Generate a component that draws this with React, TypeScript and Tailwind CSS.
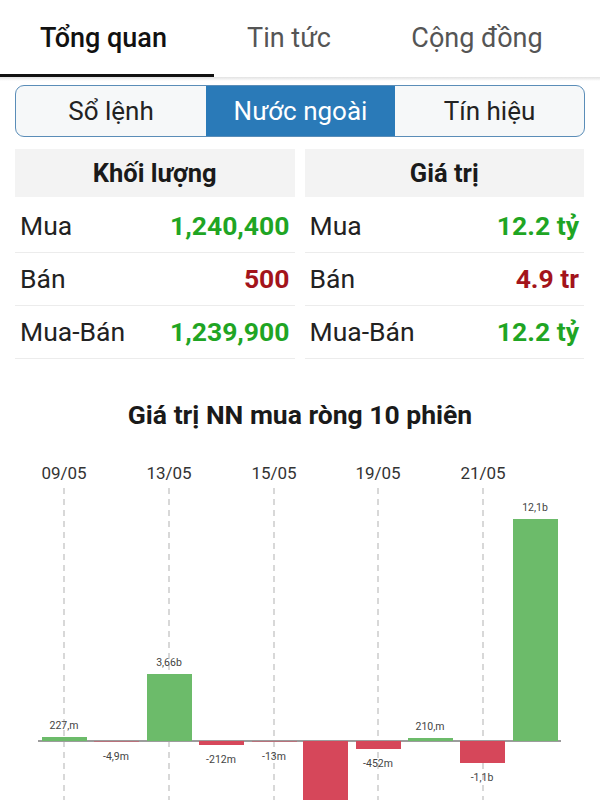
import React from "react";

const tabs = [
  { label: "Tổng quan", w: "w-[214px] pr-[7px]", active: true },
  { label: "Tin tức", w: "w-[150px]", active: false },
  { label: "Cộng đồng", w: "w-[226px]", active: false },
];

const volRows = [
  { label: "Mua", value: "1,240,400", up: true },
  { label: "Bán", value: "500", up: false },
  { label: "Mua-Bán", value: "1,239,900", up: true },
];

const valRows = [
  { label: "Mua", value: "12.2 tỷ", up: true },
  { label: "Bán", value: "4.9 tr", up: false },
  { label: "Mua-Bán", value: "12.2 tỷ", up: true },
];

// chart data: x = left edge of bar, h = pixel height (negative goes down)
const BASE = 299;
const bars = [
  { x: 42, h: 4, label: "227,m" },
  { x: 94, h: -0.5, label: "-4,9m" },
  { x: 147, h: 67, label: "3,66b" },
  { x: 199, h: -4, label: "-212m" },
  { x: 252, h: -0.5, label: "-13m" },
  { x: 303, h: -90, label: "" },
  { x: 356, h: -8, label: "-452m" },
  { x: 408, h: 3, label: "210,m" },
  { x: 460, h: -22, label: "-1,1b" },
  { x: 513, h: 222, label: "12,1b" },
];

const dates = [
  { x: 64, t: "09/05" },
  { x: 169, t: "13/05" },
  { x: 274, t: "15/05" },
  { x: 378, t: "19/05" },
  { x: 483, t: "21/05" },
];

function StatCard({ title, rows }: { title: string; rows: typeof volRows }) {
  return (
    <div className="flex-1 flex flex-col">
      <div className="h-[48px] bg-[#f3f3f3] flex items-center justify-center text-[25.5px] font-bold text-[#1a1a1a]">
        {title}
      </div>
      <div className="mt-[3px]">
        {rows.map((r) => (
          <div
            key={r.label}
            className="h-[53px] flex items-center justify-between px-[5px] border-b border-[#ececec]"
          >
            <span className="text-[26.5px] text-[#222]">{r.label}</span>
            <span
              className={
                "text-[26.5px] font-bold " +
                (r.up ? "text-[#1fa524]" : "text-[#a3141b]")
              }
            >
              {r.value}
            </span>
          </div>
        ))}
      </div>
    </div>
  );
}

function Chart() {
  return (
    <svg width="600" height="360" viewBox="0 0 600 360" className="block">
      {dates.map((d) => (
        <g key={d.t}>
          <text
            x={d.x}
            y={37}
            textAnchor="middle"
            fontSize="17"
            fill="#333"
            fontFamily="Roboto, sans-serif"
          >
            {d.t}
          </text>
          <line
            x1={d.x}
            y1={46}
            x2={d.x}
            y2={360}
            stroke="#c4c4c4"
            strokeWidth="1.3"
            strokeDasharray="6 5"
          />
        </g>
      ))}
      <line x1={38} y1={BASE} x2={561} y2={BASE} stroke="#9c9c9c" strokeWidth="2" />
      {bars.map((b, i) => {
        const up = b.h > 0;
        const h = Math.abs(b.h);
        return (
          <g key={i}>
            <rect
              x={b.x}
              y={up ? BASE - h : BASE}
              width={45}
              height={h}
              fill={up ? "#6cbb6a" : "#d6475a"}
            />
            {b.label && (
              <text
                x={b.x + 22}
                y={up ? BASE - h - 8 : BASE + h + 18}
                textAnchor="middle"
                fontSize="10.5"
                fill="#444"
                fontFamily="Roboto, sans-serif"
              >
                {b.label}
              </text>
            )}
          </g>
        );
      })}
    </svg>
  );
}

export default function App() {
  return (
    <main className="w-[600px] h-[800px] bg-white overflow-hidden font-['Roboto',sans-serif]">
      {/* top tabs */}
      <div className="flex h-[77px]">
        {tabs.map((t) => (
          <div
            key={t.label}
            className={
              t.w +
              " h-full flex items-center justify-center text-[27px] " +
              (t.active
                ? "border-b-[3px] border-[#111] text-[#111] font-medium pt-[3px]"
                : "text-[#555]")
            }
          >
            {t.label}
          </div>
        ))}
      </div>
      <div className="h-[4px] bg-gradient-to-b from-[#e2e2e2] to-white" />

      {/* segmented control */}
      <div className="px-[15px] pt-[4px]">
        <div className="flex h-[52px] border-[1.5px] border-[#5a8db8] rounded-[9px] overflow-hidden bg-[#f6f8f9] text-[26px]">
          <div className="w-[190px] flex items-center justify-center text-[#222]">Sổ lệnh</div>
          <div className="w-[189px] flex items-center justify-center bg-[#2a7ab8] text-white">
            Nước ngoài
          </div>
          <div className="flex-1 flex items-center justify-center text-[#222]">Tín hiệu</div>
        </div>
      </div>

      {/* stats */}
      <div className="flex gap-[10px] px-[15px] mt-[12px] pr-[16px]">
        <StatCard title="Khối lượng" rows={volRows} />
        <StatCard title="Giá trị" rows={valRows} />
      </div>

      {/* chart */}
      <div className="mt-[41px] text-center text-[26.5px] leading-[30px] font-bold text-[#1a1a1a]">
        Giá trị NN mua ròng 10 phiên
      </div>
      <div className="mt-[12px]">
        <Chart />
      </div>
    </main>
  );
}
